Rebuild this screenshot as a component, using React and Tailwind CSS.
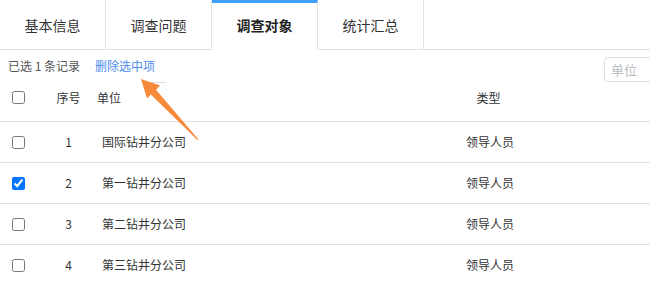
import React from "react";
import { useState } from "react";

const tabs = ["基本信息", "调查问题", "调查对象", "统计汇总"];

const rows = [
  { id: 1, name: "国际钻井分公司", type: "领导人员" },
  { id: 2, name: "第一钻井分公司", type: "领导人员" },
  { id: 3, name: "第二钻井分公司", type: "领导人员" },
  { id: 4, name: "第三钻井分公司", type: "领导人员" },
];

const Arrow = () => (
  <svg
    className="absolute left-0 top-0 pointer-events-none"
    width="650"
    height="285"
    viewBox="0 0 650 285"
  >
    <line x1="145" y1="82.5" x2="166" y2="82.5" stroke="#dcdcdc" strokeWidth="1" />
    <polygon
      points="141,79 160,85.5 156,89.8 198.5,139.5 197.5,140 150.8,94.6 147,98.5"
      fill="#f7893b"
    />
  </svg>
);

const App = () => {
  const [active, setActive] = useState(2);
  const [checked, setChecked] = useState({ 2: true });

  return (
    <div
      className="relative w-[650px] h-[285px] overflow-hidden bg-white text-[#333]"
      style={{ fontFamily: '"Noto Sans CJK SC", "Noto Sans", sans-serif' }}
    >
      <div className="flex h-[50px] border-b border-[#e2e2e2]">
        {tabs.map((t, i) => (
          <div
            key={t}
            onClick={() => setActive(i)}
            className={`w-[106px] h-[50px] flex items-center justify-center text-[14px] border-r border-[#e2e2e2] cursor-pointer ${
              i === active
                ? "bg-white border-t-[3px] border-t-[#409eff] font-bold text-[#222] -mb-px h-[50px] pb-[2px]"
                : "text-[#333]"
            } ${i === 0 ? "w-[104px]" : ""}`}
          >
            {t}
          </div>
        ))}
      </div>

      <div className="flex h-[32px] items-start">
        <div className="flex items-center h-[32px] pl-[8px] text-[12px]">
          <span className="text-[#555]">已选 1 条记录</span>
          <span className="ml-[15px] text-[#4a8cf0] cursor-pointer">删除选中项</span>
        </div>
        <div className="ml-auto mt-[7px] mr-[-20px] w-[66px] h-[25px] border border-[#dcdfe6] rounded-[4px] flex items-center pl-[6px] text-[13px] text-[#b8bcc4]">
          单位
        </div>
      </div>

      <div className="flex h-[40px] pb-[8px] items-center text-[12px] border-b border-[#e2e2e2]">
        <div className="w-[37px] pl-[12px] flex items-center">
          <input type="checkbox" className="w-[13px] h-[13px] m-0" />
        </div>
        <div className="w-[63px] text-center">序号</div>
        <div className="w-[230px] -ml-[3px]">单位</div>
        <div className="flex-1 text-center">类型</div>
      </div>

      {rows.map((r) => (
        <div
          key={r.id}
          className="flex h-[41px] items-center text-[12px] border-b border-[#e2e2e2]"
        >
          <div className="w-[37px] pl-[12px] flex items-center">
            <input
              type="checkbox"
              className="w-[13px] h-[13px] m-0"
              checked={!!checked[r.id]}
              onChange={() => setChecked({ ...checked, [r.id]: !checked[r.id] })}
            />
          </div>
          <div className="w-[63px] text-center">{r.id}</div>
          <div className="w-[230px] pl-[2px]">{r.name}</div>
          <div className="flex-1 text-center">{r.type}</div>
        </div>
      ))}

      <Arrow />
    </div>
  );
};

export default App;
